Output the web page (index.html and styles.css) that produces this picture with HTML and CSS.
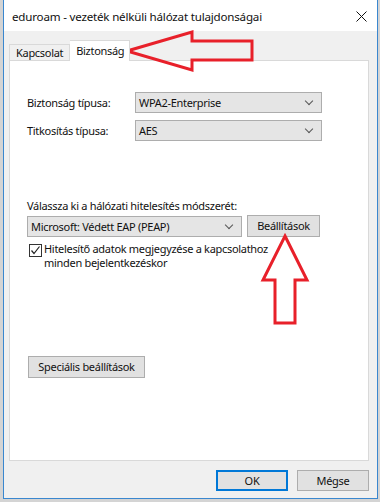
FILE: index.html
```html
<!DOCTYPE html>
<html lang="hu">
    <head>
	<meta charset="utf-8">
        <link rel="stylesheet" href="styles.css">
    </head>
    <body>
<div id="window">
    <div class="titlebar">
        <span class="title">eduroam - vezeték nélküli hálózat tulajdonságai</span>
        <svg class="close" width="11" height="11" viewBox="0 0 11 11">
            <path d="M0.5 0.5 L10.5 10.5 M10.5 0.5 L0.5 10.5" stroke="#111" stroke-width="1" fill="none"/>
        </svg>
    </div>
    <div class="dialog">
        <div class="tabs">
            <div class="tab">Kapcsolat</div>
            <div class="tab selected">Biztonság</div>
        </div>
        <div class="panel">
            <div class="row">
                <span class="label">Biztonság típusa:</span>
                <div class="combo wide">WPA2-Enterprise<span class="chevron"></span></div>
            </div>
            <div class="row">
                <span class="label">Titkosítás típusa:</span>
                <div class="combo wide">AES<span class="chevron"></span></div>
            </div>
            <div class="methodlabel">Válassza ki a hálózati hitelesítés módszerét:</div>
            <div class="row method">
                <div class="combo long">Microsoft: Védett EAP (PEAP)<span class="chevron"></span></div>
                <div class="btn settings">Beállítások</div>
            </div>
            <div class="check">
                <span class="box">
                    <svg width="11" height="11" viewBox="0 0 11 11">
                        <path d="M1.5 5.5 L4 8.5 L9.5 1.5" stroke="#222" stroke-width="1.2" fill="none"/>
                    </svg>
                </span>
                <span class="checktext">Hitelesítő adatok megjegyzése a kapcsolathoz<br>minden bejelentkezéskor</span>
            </div>
            <div class="btn special">Speciális beállítások</div>
        </div>
        <div class="footer">
            <div class="btn foot default">OK</div>
            <div class="btn foot">Mégse</div>
        </div>
    </div>
</div>

<!-- red annotation arrows drawn over the screenshot -->
<svg class="arrows" width="380" height="502" viewBox="0 0 380 502">
    <path d="M127 51 L192 32 L192 41 L252 41 L252 60 L192 60 L192 70 Z" stroke="#e8202a" stroke-width="3" fill="none" stroke-linejoin="miter"/>
    <path d="M285 236 L307 280 L295 280 L295 323 L275 323 L275 280 L263 280 Z" stroke="#e8202a" stroke-width="3" fill="none" stroke-linejoin="miter"/>
</svg>
    </body>
</html>
```
FILE: styles.css
```css
body{
    margin: 0;
    font-family: "Noto Sans", sans-serif;
    font-size: 11px;
    letter-spacing: -0.3px;
    color: #111;
    background-color: #d4d4d4;
    height: 502px;
    overflow: hidden;
}
#window{
    margin-left: 3px;
    width: 373px;
    height: 498px;
    border: 1px solid #3a87cf;
    border-top: 0;
    background-color: #f0f0f0;
}
.titlebar{
    height: 31px;
    background-color: #fff;
    display: flex;
    align-items: center;
    justify-content: space-between;
    padding: 0 10px 0 8px;
}
.title{
    font-size: 11.6px;
    letter-spacing: -0.2px;
    margin-top: 1px;
}
.close{
    margin-top: 1px;
}
.dialog{
    padding: 0 8px 0 5px;
}
.tabs{
    height: 29px;
    display: flex;
    align-items: flex-end;
}
.tab{
    height: 15px;
    line-height: 15px;
    padding: 0 6px;
    border: 1px solid #d9d9d9;
    border-bottom: 0;
    background-color: #f0f0f0;
}
.tab.selected{
    height: 20px;
    line-height: 19px;
    width: 47px;
    background-color: #fff;
    border-left: 0;
    position: relative;
    top: 1px;
    z-index: 1;
}
.panel{
    height: 401px;
    border: 1px solid #d9d9d9;
    background-color: #fff;
    padding: 31px 0 0 17px;
    box-sizing: border-box;
    display: flex;
    flex-direction: column;
    align-items: flex-start;
}
.row{
    display: flex;
    align-items: center;
    margin-bottom: 7px;
}
.label{
    width: 108px;
}
.combo{
    height: 19px;
    line-height: 19px;
    border: 1px solid #adadad;
    background-color: #e5e5e5;
    padding-left: 3px;
    position: relative;
}
.combo.wide{
    width: 182px;
}
.combo.long{
    width: 210px;
}
.chevron{
    position: absolute;
    right: 9px;
    top: 5px;
    width: 5px;
    height: 5px;
    border-right: 1px solid #555;
    border-bottom: 1px solid #555;
    transform: rotate(45deg);
}
.methodlabel{
    margin-top: 50px;
    margin-bottom: 1px;
    height: 16px;
    line-height: 16px;
}
.row.method{
    margin-bottom: 6px;
}
.btn{
    height: 19px;
    line-height: 19px;
    border: 1px solid #adadad;
    background-color: #e1e1e1;
    text-align: center;
}
.settings{
    width: 71px;
    margin-left: 5px;
    height: 20px;
    line-height: 20px;
}
.check{
    display: flex;
    align-items: flex-start;
    margin-left: 2px;
}
.box{
    width: 11px;
    height: 11px;
    border: 1px solid #333;
    margin-top: 1px;
    display: flex;
}
.checktext{
    margin-left: 2px;
    margin-top: -1px;
    line-height: 14px;
}
.special{
    width: 115px;
    height: 20px;
    line-height: 20px;
    margin-top: 86px;
    margin-left: 1px;
}
.footer{
    display: flex;
    justify-content: flex-end;
    padding-top: 9px;
}
.foot{
    width: 70px;
    margin-left: 9px;
}
.foot.default{
    border: 2px solid #0078d7;
    height: 17px;
    line-height: 17px;
    width: 68px;
}
.arrows{
    position: absolute;
    left: 0;
    top: 0;
}
```
